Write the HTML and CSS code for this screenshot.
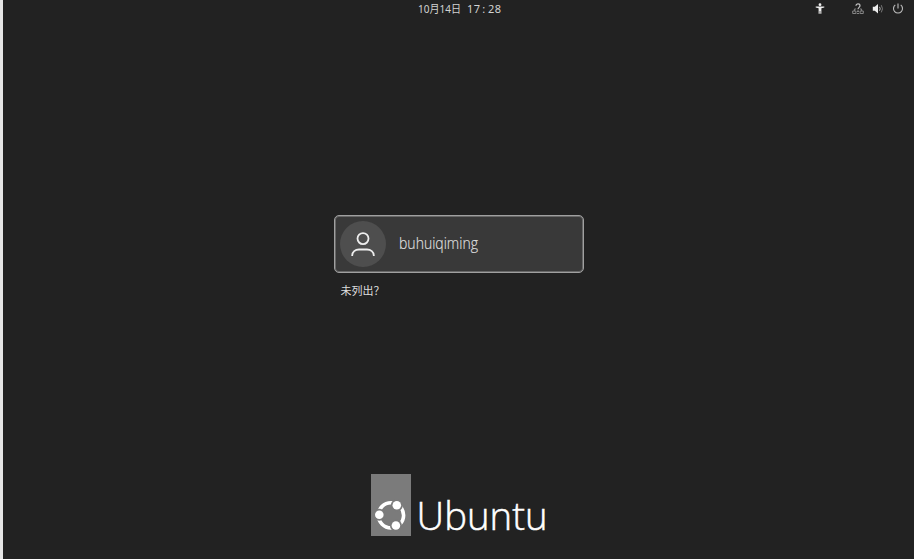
FILE: index.html
```html
<!DOCTYPE html>
<html lang="zh-CN">
<head>
<meta charset="utf-8">
<title>Ubuntu</title>
<link rel="stylesheet" href="styles.css">
</head>
<body>
<header class="topbar">
  <time class="clock"><svg width="83" height="17"><text x="0" y="12.5" textLength="43" lengthAdjust="spacingAndGlyphs">10月14日</text><text x="49" y="12.5" textLength="13">17</text><text x="64.2" y="12.5">:</text><text x="70" y="12.5" textLength="13">28</text></svg></time>
  <div class="status">
    <svg class="access" width="10" height="12" viewBox="0 0 10 12"><circle cx="5" cy="1.7" r="1.4"/><path d="M.7 3.6h8.6v1L6.4 5.2V10.7H5.3V8h-.6v2.7H3.6V5.2L.7 4.6z"/></svg>
    <svg class="network" width="12" height="12" viewBox="0 0 12 12"><path class="wire" d="M2.4 8V6h1.8M7.8 6h1.8v2M.7 8h3.2v2.5H.7zM8.1 8h3.2v2.5H8.1zM4.8 10.5h2.4"/><path class="question" d="M4 2.8C4 .3 8 .3 8 2.8 8 4.3 6 4.4 6 6.2M6 7.6v1.4"/></svg>
    <svg class="sound" width="12" height="12" viewBox="0 0 12 12"><path d="M.8 3.8h2L6 1v9.6L2.8 7.8h-2z"/><path class="wave" d="M7.5 3.8q1.4 2 0 4"/><path class="wave far" d="M9.3 2.2q2.4 3.6 0 7.2"/></svg>
    <svg class="power" width="12" height="12" viewBox="0 0 12 12"><path d="M3.3 1.9a4.5 4.5 0 1 0 5.4 0M6 .4v5"/></svg>
  </div>
</header>
<main class="login">
  <div class="user">
    <div class="avatar"><svg width="24" height="26" viewBox="0 0 24 26"><circle cx="12" cy="7.6" r="5.5"/><path d="M1.2 25v-.5c0-3.5 3-6 6.8-6h8c3.8 0 6.8 2.5 6.8 6v.5"/></svg></div>
    <svg class="name" width="80" height="28"><text x="0" y="19" textLength="79" lengthAdjust="spacingAndGlyphs">buhuiqiming</text></svg>
  </div>
  <div class="unlisted">未列出？</div>
</main>
<footer class="brand">
  <div class="mark"><svg width="40" height="62" viewBox="0 0 40 62">
    <circle class="ring" cx="20" cy="41.3" r="12.6"/>
    <g class="gap"><circle cx="8.3" cy="40.8" r="6"/><circle cx="25.8" cy="31.3" r="6"/><circle cx="24.9" cy="51.5" r="6"/></g>
    <g class="node"><circle cx="8.3" cy="40.8" r="4.3"/><circle cx="25.8" cy="31.3" r="4.3"/><circle cx="24.9" cy="51.5" r="4.3"/></g>
  </svg></div>
  <svg class="wordmark" width="134" height="62"><text x="5.6" y="55.6" textLength="131" lengthAdjust="spacingAndGlyphs">Ubuntu</text></svg>
</footer>
</body>
</html>
```
FILE: styles.css
```css
* { box-sizing: border-box; }
body {
  margin: 0;
  height: 559px;
  overflow: hidden;
  border-left: 3px solid #e6e6e6;
  background: #222;
  color: #ddd;
  font-family: "Noto Sans", "Noto Sans CJK SC", sans-serif;
  display: flex;
  flex-direction: column;
}
svg { display: block; overflow: visible; }
.topbar {
  height: 18px;
  display: grid;
  grid-template-columns: 415px 1fr auto;
}
.clock { grid-column: 2; }
.clock text { font-size: 11px; fill: #d2d2d2; }
.status { display: flex; padding: 3px 10.5px 0 0; }
.status svg { fill: #eee; }
.access { margin-right: 27px; }
.network { margin-right: 8px; }
.sound { margin-right: 8px; }
.status .network, .status .power { fill: none; }
.wire { stroke: #858585; }
.question { stroke: #c4c4c4; stroke-width: 1.2; }
.status .wave { fill: none; stroke: #bbb; }
.status .far { stroke: #777; }
.power { stroke: #bdbdbd; stroke-width: 1.1; }
.login { margin: 197px 0 0 330.5px; width: 250.5px; }
.user {
  height: 58px;
  border: 1px solid #a0a0a0;
  border-radius: 5px;
  background: #393939;
  box-shadow: inset 0 0 0 1px #686868;
  display: flex;
  align-items: center;
  padding-left: 5px;
}
.avatar {
  width: 46px;
  height: 46px;
  border-radius: 50%;
  background: #4e4e4e;
  display: flex;
  align-items: center;
  justify-content: center;
}
.avatar svg { fill: none; stroke: #eee; stroke-width: 1.8; }
.name { margin-left: 13px; }
.name text { font: 300 15.5px "Open Sans", sans-serif; fill: #ddd; stroke: #ddd; stroke-width: .2; }
.unlisted { margin: 10px 0 0 7px; font-size: 11px; line-height: 16px; }
.brand { margin: auto 0 23px 367.5px; height: 62.5px; display: flex; }
.mark { width: 40px; height: 62px; background: #7b7b7b; }
.ring { fill: none; stroke: #fff; stroke-width: 3.6; }
.gap { fill: #7b7b7b; }
.node { fill: #fff; }
.wordmark text { font: 300 39px "Open Sans", sans-serif; fill: #fff; stroke: #fff; stroke-width: .5; }
```
